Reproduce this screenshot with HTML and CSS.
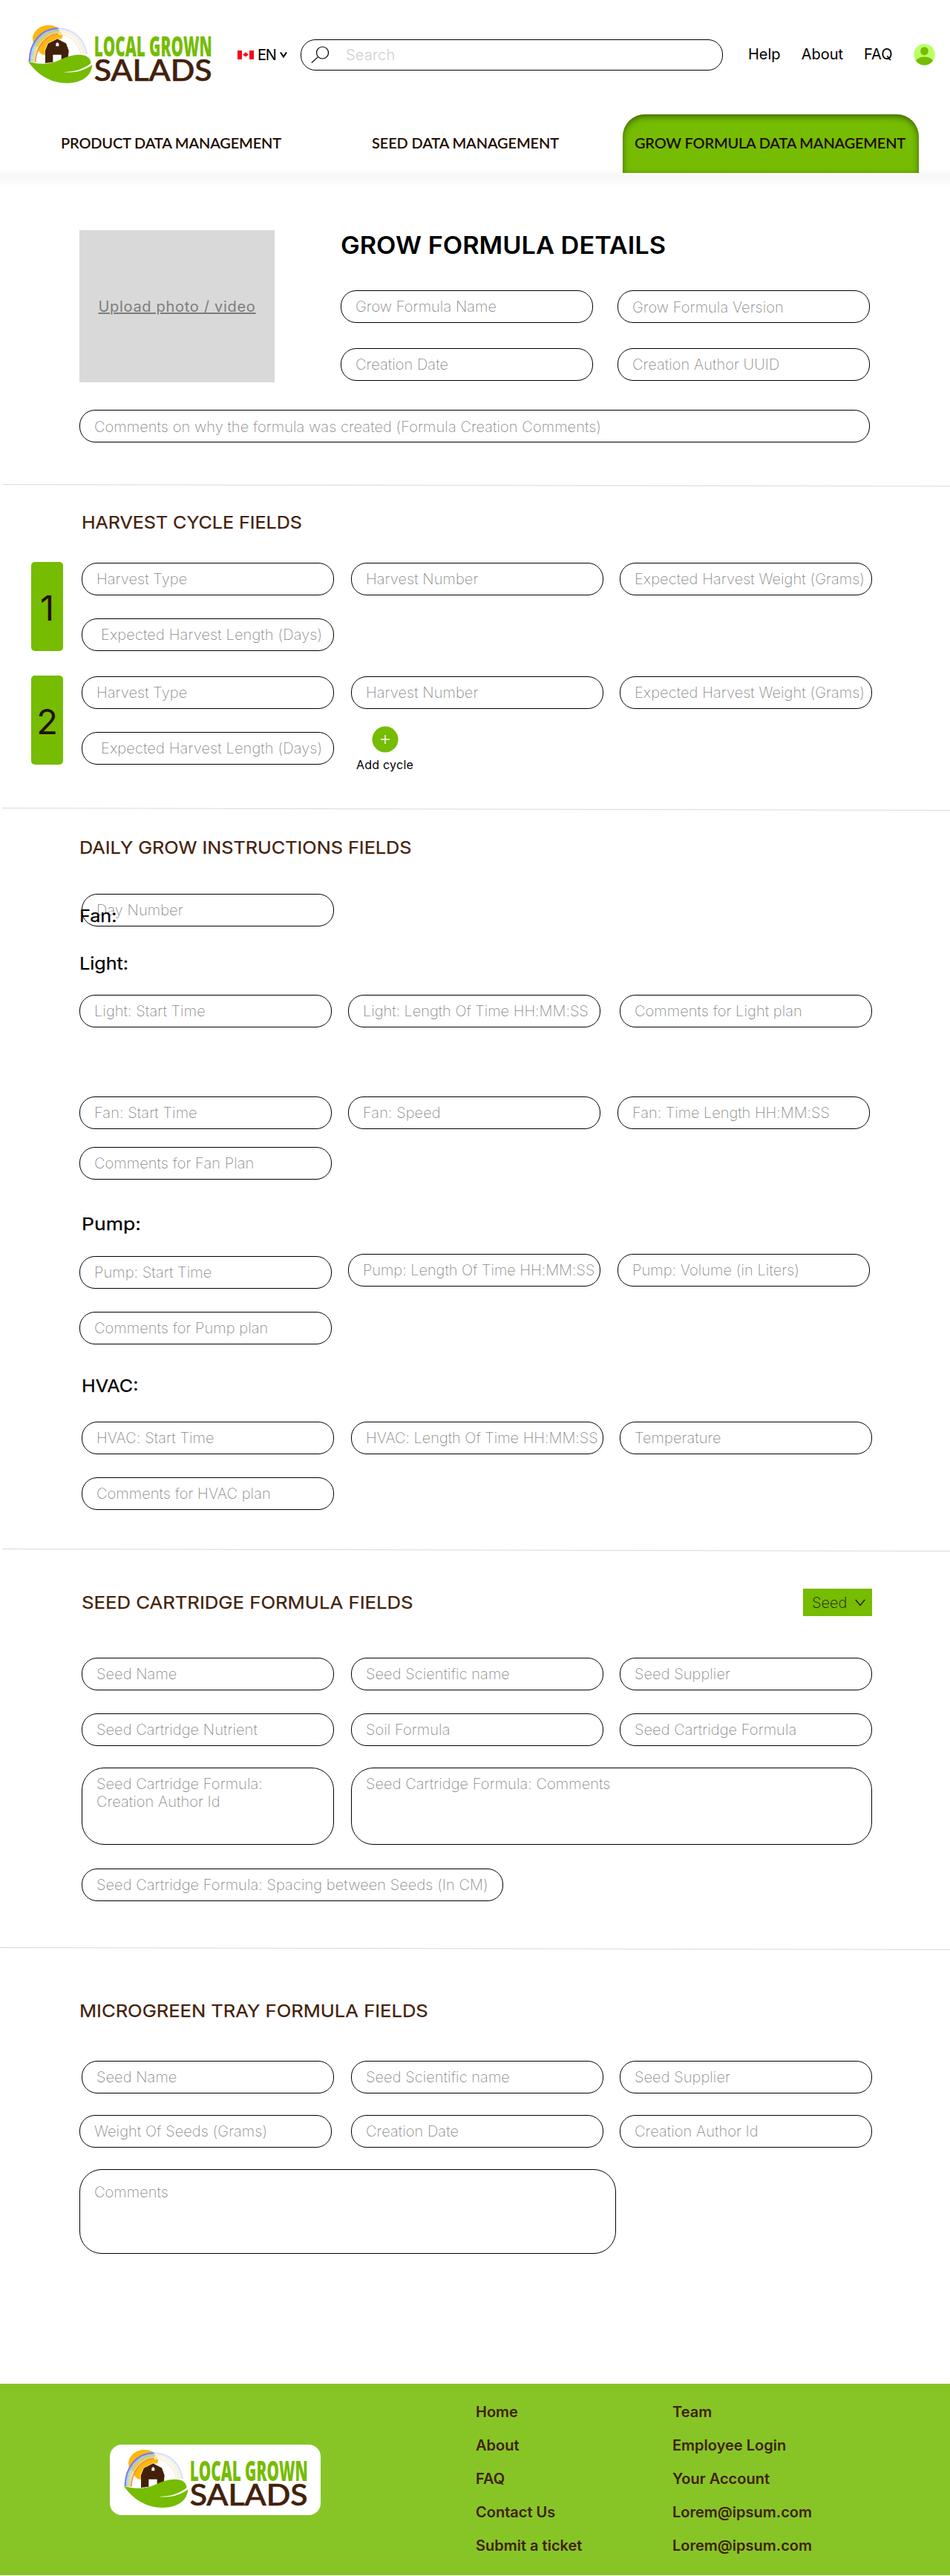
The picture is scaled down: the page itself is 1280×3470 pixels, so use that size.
FILE: index.html
```
<!DOCTYPE html>
<html lang="en">
<head>
<meta charset="utf-8">
<title>Grow Formula Data Management</title>
<link rel="stylesheet" href="styles.css">
</head>
<body>
<svg class="defs" width="0" height="0" aria-hidden="true">
  <symbol id="logo" viewBox="54 40 744 240">
    <path d="M72 95 76 78 88 62 104 50 126 43 152 44 172 52 186 66 193 84 190 98 170 100 124 140 122 164 108 160 94 146 96 132 82 126 74 112Z" fill="#fdb908"/>
    <g fill="none">
      <path d="M59 190C60 112 106 56 176 56" stroke="#7d7df0" stroke-width="7"/>
      <path d="M66 191C66 118 110 63 178 62" stroke="#a9c8ef" stroke-width="6"/>
      <path d="M72 192C72 124 114 70 180 68" stroke="#b5dca0" stroke-width="5"/>
      <path d="M77 192C78 130 120 76 182 73" stroke="#f7dc6a" stroke-width="5"/>
      <path d="M83 193C84 136 122 82 174 78" stroke="#f08a62" stroke-width="5"/>
      <path d="M176 56C240 58 280 98 291 160" stroke="#dcdcfa" stroke-width="6"/>
      <path d="M178 62C234 64 270 100 283 160" stroke="#e2f2fa" stroke-width="6"/>
      <path d="M180 69C228 72 262 104 276 160" stroke="#fdf6cf" stroke-width="7"/>
      <path d="M176 77C220 80 252 106 268 160" stroke="#fdebe2" stroke-width="5"/>
    </g>
    <path d="M123 196V144L134 116 172 97 208 116 218 146 215 176 188 186V162H154V192Z" fill="#42210b"/>
    <path d="M120 146 134 116 172 97 208 116 220 146" fill="none" stroke="#fff" stroke-width="2"/>
    <path d="M166 128V117L172 112 178 117V128Z" fill="#fff"/>
    <path d="M54 190C110 204 146 200 180 184C216 166 250 158 282 165C300 171 308 184 307 197C276 222 240 232 196 232C240 238 282 226 313 203C310 250 268 277 212 277C142 277 88 240 54 190Z" fill="#75bc02"/>
    <text class="logo-top" x="320" y="169" textLength="477" lengthAdjust="spacingAndGlyphs">LOCAL GROWN</text>
    <text class="logo-bottom" x="320" y="269" textLength="477" lengthAdjust="spacingAndGlyphs">SALADS</text>
  </symbol>
</svg>

<header class="header">
  <div class="topbar">
    <svg class="logo" width="248" height="80"><use href="#logo"/></svg>
    <div class="lang">
      <svg width="22" height="12" viewBox="0 0 22 12"><path d="M0 0h6v12H0zM16 0h6v12h-6z" fill="#f5061d"/><path d="M11 2l1 1.600 1-.4-.3 1.800 1.500-.8.6 1.300-2.100 2.100-1.500.3v1.800h-.4V7.900l-1.500-.3-2.100-2.100.6-1.300 1.500.8L9 3.200l1 .4z" fill="#f5061d"/></svg>
      <span class="lang-code">EN</span>
      <svg width="10" height="8" viewBox="0 0 10 8"><path d="M1 .5 5 6.500 9 .5" fill="none" stroke="#000" stroke-width="2"/></svg>
    </div>
    <div class="search">
      <svg width="24" height="24" viewBox="0 0 24 24" fill="none" stroke="#000" stroke-width="1.200"><circle cx="15.500" cy="9" r="8"/><path d="M9.600 14.600.8 22.500"/></svg>
      <span>Search</span>
    </div>
    <nav class="links"><a>Help</a><a>About</a><a>FAQ</a></nav>
    <svg class="avatar" width="29" height="29" viewBox="0 0 29 29"><clipPath id="disc"><circle cx="14.500" cy="14.500" r="14.300"/></clipPath><g clip-path="url(#disc)"><path d="M0 0h29v29H0z" fill="#bbff66"/><ellipse cx="14.500" cy="9.800" rx="5.300" ry="5.600" fill="#75bc02"/><ellipse cx="14.500" cy="26" rx="12.500" ry="8.500" fill="#75bc02"/></g></svg>
  </div>
  <nav class="tabs">
    <a class="tab tab-product">PRODUCT DATA MANAGEMENT</a>
    <a class="tab tab-seed">SEED DATA MANAGEMENT</a>
    <a class="tab tab-active">GROW FORMULA DATA MANAGEMENT</a>
  </nav>
</header>

<main>
  <section class="details">
    <div class="details-top">
      <div class="upload">Upload photo / video</div>
      <div class="details-fields">
        <h1>GROW FORMULA DETAILS</h1>
        <div class="row first"><div class="field">Grow Formula Name</div><div class="field low">Grow Formula Version</div></div>
        <div class="row"><div class="field">Creation Date</div><div class="field">Creation Author UUID</div></div>
      </div>
    </div>
    <div class="field wide low">Comments on why the formula was created (Formula Creation Comments)</div>
  </section>

  <svg class="divider" width="1280" height="4"><path d="M3 .7 1280 3"/></svg>

  <section class="harvest">
    <h2 class="t-harvest">HARVEST CYCLE FIELDS</h2>
    <div class="cycle">
      <div class="badge">1</div>
      <div class="cycle-fields">
        <div class="row"><div class="field">Harvest Type</div><div class="field">Harvest Number</div><div class="field">Expected Harvest Weight (Grams)</div></div>
        <div class="row"><div class="field inset">Expected Harvest Length (Days)</div></div>
      </div>
    </div>
    <div class="cycle">
      <div class="badge">2</div>
      <div class="cycle-fields">
        <div class="row"><div class="field">Harvest Type</div><div class="field">Harvest Number</div><div class="field">Expected Harvest Weight (Grams)</div></div>
        <div class="row"><div class="field inset">Expected Harvest Length (Days)</div>
          <div class="add"><svg width="36" height="36" viewBox="0 0 36 36"><circle cx="18" cy="18" r="17.500" fill="#75bc02"/><path d="M18 12v12M12 18h12" stroke="#fff" stroke-width="1.400"/></svg><span>Add cycle</span></div>
        </div>
      </div>
    </div>
  </section>

  <svg class="divider" width="1280" height="4"><path d="M3 .5 1280 3.500"/></svg>

  <section class="daily">
    <h2 class="shift t-daily">DAILY GROW INSTRUCTIONS FIELDS</h2>
    <div class="row day"><div class="field">Day Number</div><h3 class="shift fan-title">Fan:</h3></div>
    <h3 class="shift light-title">Light:</h3>
    <div class="row left light"><div class="field">Light: Start Time</div><div class="field time">Light: Length Of Time HH:MM:SS</div><div class="field">Comments for Light plan</div></div>
    <div class="row left fan"><div class="field">Fan: Start Time</div><div class="field">Fan: Speed</div><div class="field time">Fan: Time Length HH:MM:SS</div></div>
    <div class="row left fan-notes"><div class="field">Comments for Fan Plan</div></div>
    <h3 class="pump-title">Pump:</h3>
    <div class="row left pump"><div class="field">Pump: Start Time</div><div class="field time">Pump: Length Of Time HH:MM:SS</div><div class="field">Pump: Volume (in Liters)</div></div>
    <div class="row left spaced"><div class="field">Comments for Pump plan</div></div>
    <h3 class="hvac-title">HVAC:</h3>
    <div class="row hvac"><div class="field">HVAC: Start Time</div><div class="field time">HVAC: Length Of Time HH:MM:SS</div><div class="field">Temperature</div></div>
    <div class="row spaced"><div class="field">Comments for HVAC plan</div></div>
  </section>

  <svg class="divider" width="1280" height="4"><path d="M3 .5 1280 3.500"/></svg>

  <section class="seed">
    <div class="seed-head"><h2 class="t-seed">SEED CARTRIDGE FORMULA FIELDS</h2>
      <div class="select"><span>Seed</span><svg width="14" height="10" viewBox="0 0 14 10"><path d="M.8 1 7 8.500 13.200 1" fill="none" stroke="#231005" stroke-width="1.300"/></svg></div></div>
    <div class="row seed-first"><div class="field">Seed Name</div><div class="field">Seed Scientific name</div><div class="field">Seed Supplier</div></div>
    <div class="row spaced"><div class="field">Seed Cartridge Nutrient</div><div class="field">Soil Formula</div><div class="field">Seed Cartridge Formula</div></div>
    <div class="row seed-areas"><div class="area">Seed Cartridge Formula:<br>Creation Author Id</div><div class="area grow">Seed Cartridge Formula: Comments</div></div>
    <div class="row seed-spacing"><div class="field">Seed Cartridge Formula: Spacing between Seeds (In CM)</div></div>
  </section>

  <svg class="divider" width="1280" height="4"><path d="M0 .5 1280 3.300"/></svg>

  <section class="micro">
    <h2 class="shift t-micro">MICROGREEN TRAY FORMULA FIELDS</h2>
    <div class="row micro-first"><div class="field">Seed Name</div><div class="field">Seed Scientific name</div><div class="field">Seed Supplier</div></div>
    <div class="row left micro-second"><div class="field">Weight Of Seeds (Grams)</div><div class="field">Creation Date</div><div class="field">Creation Author Id</div></div>
    <div class="area micro-comments">Comments</div>
  </section>
</main>

<footer class="footer">
  <div class="card"><svg width="248" height="80"><use href="#logo"/></svg></div>
  <nav class="foot-col"><a>Home</a><a>About</a><a>FAQ</a><a>Contact Us</a><a>Submit a ticket</a></nav>
  <nav class="foot-col"><a>Team</a><a>Employee Login</a><a>Your Account</a><a>Lorem@ipsum.com</a><a>Lorem@ipsum.com</a></nav>
</footer>
</body>
</html>
```
FILE: styles.css
```
* { box-sizing: border-box; }

body {
  margin: 0;
  width: 1280px;
  height: 3470px;
  background: #fff;
  color: #000;
  font-family: Inter, "Liberation Sans", sans-serif;
  font-size: 20px;
}

h1, h2, h3 { margin: 0; width: fit-content; }
svg { display: block; flex: none; }
.defs { position: absolute; }

/* Logo lettering */
.logo-top { font: 800 113px "Open Sans", sans-serif; fill: #75bc02; }
.logo-bottom { font: 500 119px Lato, sans-serif; fill: #42210b; stroke: #42210b; stroke-width: 2px; }

/* Header */
.topbar { display: flex; height: 154px; padding-left: 38px; }
.logo { margin-top: 33px; }
.lang { display: flex; align-items: center; height: 20px; margin: 64px 0 0 34px; }
.lang-code { width: 25px; margin: 0 5px 0 5px; font-size: 20px; font-weight: 400; letter-spacing: -1.2px; }
.search {
  display: flex; align-items: center;
  width: 569px; height: 42px; margin: 53px 0 0 18px; padding-left: 13px;
  border: 1px solid #000; border-radius: 20px;
  color: #cfcfcf; font-weight: 300; letter-spacing: .2px;
}
.search span { margin-left: 23px; }
.links { display: flex; gap: 28px; height: 40px; margin: 53px 0 0 34px; line-height: 40px; }
.avatar { margin: 59px 0 0 29px; }

.tabs { display: flex; position: relative; height: 79px; font: 600 20px/77px Lato, sans-serif; color: #220c00; white-space: nowrap; }
.tabs::after {
  content: ""; position: absolute; left: 0; top: 72px; width: 1280px; height: 26px;
  background: linear-gradient(#fff, #f7f7f7 45%, #fff);
}
.tab { position: relative; z-index: 1; letter-spacing: -.17px; }
.tab-product { margin-left: 82px; width: 419px; }
.tab-seed { width: 338px; letter-spacing: -.13px; }
.tab-active {
  width: 399px; padding-left: 16px; background: #75bc02; letter-spacing: -.21px;
  border-radius: 30px 30px 0 0; box-shadow: inset 0 3px 8px rgba(35, 50, 0, .65);
}

/* Fields */
.row { display: flex; padding-left: 110px; gap: 23px; }
.row.left { padding-left: 107px; }
.row .field:nth-child(3) { margin-left: -1px; }
.row.left .field:nth-child(2) { margin-left: -1px; }
.row.left .field:nth-child(3) { margin-left: 0; }
.field, .area {
  width: 340px; height: 44px; padding-left: 19px;
  border: 1px solid #000; border-radius: 21px;
  color: rgba(0, 0, 0, .5); font-weight: 200; line-height: 42px; letter-spacing: .06px; white-space: nowrap;
}
.field.low { padding-top: 1px; }
.field.inset { padding-left: 25px; letter-spacing: .12px; }
.field.time { letter-spacing: -.04px; }
.area { height: 104px; padding-top: 9px; border-radius: 30px; line-height: 24px; }
.spaced { margin-top: 31px; }

/* Headings are set slightly extended */
h2, h3 {
  padding-left: 110px; font-size: 23.5px; font-weight: 400; line-height: 31px;
  transform-origin: 110px 0; -webkit-text-stroke: .25px currentColor;
}
h2 { color: #42210b; }
h3 { transform: scaleX(1.07); }
h2.shift, h3.shift { padding-left: 107px; transform-origin: 107px 0; }
.t-harvest { transform: scaleX(1.065); }
.t-daily { transform: scaleX(1.074); }
.t-seed { transform: scaleX(1.094); }
.t-micro { transform: scaleX(1.088); }

.divider { stroke: #d9d9d9; stroke-width: 1; fill: none; }

/* Formula details */
.details { padding-top: 77px; }
.details-top { display: flex; padding-left: 107px; gap: 89px; }
.upload {
  width: 263px; height: 205px; background: #d9d9d9; color: #7d7d7d;
  font-weight: 400; line-height: 207px; text-align: center; text-decoration: underline; letter-spacing: .7px;
}
h1 { font-size: 32px; font-weight: 600; line-height: 41px; height: 40px; transform: scaleX(1.073); transform-origin: 0 0; }
.details-fields .row { padding-left: 0; gap: 33px; margin-top: 34px; }
.details-fields .row.first { margin-top: 41px; }
.wide { width: 1065px; margin: 37px 0 56px 107px; }

/* Harvest cycles */
.harvest { padding: 32px 0 58px; }
.cycle { display: flex; height: 120px; margin-top: 33px; padding-left: 42px; }
h2 + .cycle { margin-top: 38px; }
.badge { width: 43px; border-radius: 5px; background: #75bc02; color: #231005; font-size: 47px; font-weight: 400; line-height: 123px; text-align: center; }
.cycle-fields { padding: 1px 0 0 25px; }
.cycle-fields .row { padding-left: 0; }
.cycle-fields .row + .row { margin-top: 31px; height: 44px; }
.add { display: flex; flex-direction: column; align-items: center; width: 77px; margin: -8px 0 0 7px; font-size: 16px; line-height: 20px; white-space: nowrap; letter-spacing: .25px; }
.add span { margin-top: 6px; }

/* Daily instructions */
.daily { padding: 34px 0 52px; }
.day { position: relative; margin-top: 47px; }
.fan-title { position: absolute; left: 0; top: 14px; }
.light-title { margin-top: 34px; }
.light { margin-top: 27px; }
.row.light .field:nth-child(3) { margin-left: 3px; }
.fan { margin-top: 93px; }
.fan-notes { margin-top: 24px; }
.pump-title { margin-top: 44px; transform: scaleX(1.13); }
.pump { margin-top: 25px; }
.pump .field:first-child { margin-top: 3px; }
.hvac-title { margin-top: 40px; }
.hvac { margin-top: 33px; }

/* Seed cartridge */
.seed { padding: 50px 0 62px; }
.seed-head { display: flex; align-items: center; justify-content: space-between; height: 37px; padding-right: 105px; }
.select { display: flex; align-items: center; gap: 11px; width: 93px; height: 37px; padding-left: 12px; background: #75bc02; color: #231005; font-weight: 200; }
.seed-first { margin-top: 56px; }
.seed-areas { margin-top: 29px; }
.area.grow { width: 702px; }
.seed-spacing { margin-top: 32px; }
.seed-spacing .field { width: 568px; }

/* Microgreen tray */
.micro { padding: 66px 0 175px; }
.micro-first { margin-top: 52px; }
.micro-second { margin-top: 29px; }
.row.micro-second .field:nth-child(2) { margin-left: 3px; }
.row.micro-second .field:nth-child(3) { margin-left: -1px; }
.micro-comments { width: 723px; height: 114px; margin: 29px 0 0 107px; padding-top: 18px; }

/* Footer */
.footer { display: flex; height: 258px; padding-left: 148px; background: #87c527; }
.card { width: 284px; height: 95px; margin: 82px 209px 0 0; padding: 6px 0 0 19px; background: #fff; border-radius: 16px; }
.foot-col { display: flex; flex-direction: column; width: 265px; padding-top: 16px; color: #42210b; font-weight: 600; line-height: 45px; }
```
